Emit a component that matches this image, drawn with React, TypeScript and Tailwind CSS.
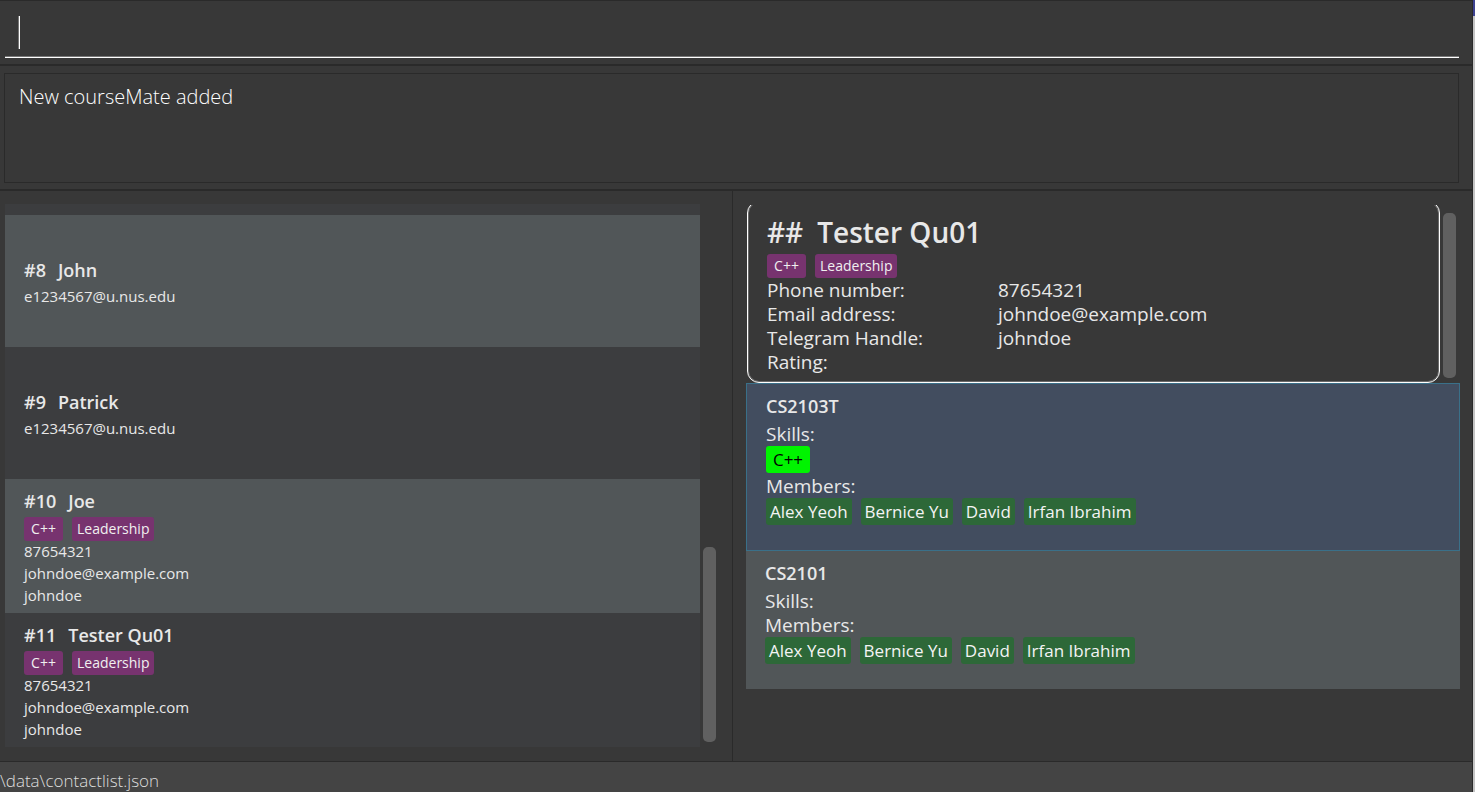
import React from "react";

type Contact = {
  index: number;
  name: string;
  tags?: string[];
  details: string[];
};

type Group = {
  name: string;
  skills: string[];
  members: string[];
  selected?: boolean;
};

const contacts: Contact[] = [
  { index: 8, name: "John", details: ["e1234567@u.nus.edu"] },
  { index: 9, name: "Patrick", details: ["e1234567@u.nus.edu"] },
  {
    index: 10,
    name: "Joe",
    tags: ["C++", "Leadership"],
    details: ["87654321", "johndoe@example.com", "johndoe"],
  },
  {
    index: 11,
    name: "Tester Qu01",
    tags: ["C++", "Leadership"],
    details: ["87654321", "johndoe@example.com", "johndoe"],
  },
];

const profile: [string, string][] = [
  ["Phone number:", "87654321"],
  ["Email address:", "johndoe@example.com"],
  ["Telegram Handle:", "johndoe"],
  ["Rating:", ""],
];

const members = ["Alex Yeoh", "Bernice Yu", "David", "Irfan Ibrahim"];

const groups: Group[] = [
  { name: "CS2103T", skills: ["C++"], members, selected: true },
  { name: "CS2101", skills: [], members },
];

function SkillTags({ tags }: { tags: string[] }) {
  return (
    <div className="flex gap-[9px]">
      {tags.map((tag) => (
        <span
          key={tag}
          className="h-6 min-w-[39px] rounded-[3px] bg-[#77336f] px-[5px] text-center text-sm leading-[23px] font-medium text-[#f0f0f0]"
        >
          {tag}
        </span>
      ))}
    </div>
  );
}

function ContactRow({ contact }: { contact: Contact }) {
  return (
    <li className="flex min-h-[132px] flex-col justify-center pt-2 pr-4 pb-[7px] pl-[19px] odd:bg-[#515658] even:bg-[#3c3d3f]">
      <h2 className="mb-0.5 flex gap-3 text-lg leading-7 font-semibold">
        <span>#{contact.index}</span>
        <span>{contact.name}</span>
      </h2>
      {contact.tags && <SkillTags tags={contact.tags} />}
      <div className="-mt-px text-[15px] leading-[22px]">
        {contact.details.map((detail) => (
          <p key={detail}>{detail}</p>
        ))}
      </div>
    </li>
  );
}

function GroupRow({ group }: { group: Group }) {
  return (
    <li
      className={
        group.selected
          ? "border border-[#3a7089] bg-[#424d5f] pt-2 pr-4 pb-[25px] pl-[19px]"
          : "bg-[#515658] pt-2 pr-4 pb-[25px] pl-[19px]"
      }
    >
      <h2 className="mb-0.5 text-lg leading-7 font-semibold">{group.name}</h2>
      <p className="text-[19px] leading-6">Skills:</p>
      {group.skills.length > 0 && (
        <div className="mb-px flex gap-[9px]">
          {group.skills.map((skill) => (
            <span
              key={skill}
              className="h-[27px] min-w-11 rounded-[3px] bg-[#00f400] px-1 text-center text-[17px] leading-[27px] font-medium text-black"
            >
              {skill}
            </span>
          ))}
        </div>
      )}
      <p className="text-[19px] leading-6">Members:</p>
      <div className="flex gap-[9px]">
        {group.members.map((member) => (
          <span
            key={member}
            className="h-[27px] rounded-[3px] bg-[#2d6838] px-1 text-[17px] leading-[27px] font-medium text-[#f4f4f4]"
          >
            {member}
          </span>
        ))}
      </div>
    </li>
  );
}

export default function App() {
  return (
    <div className="flex min-h-screen bg-[#383838] font-['Open_Sans','Noto_Sans',sans-serif] text-[#e8e8e8]">
      <div className="flex min-w-0 flex-1 flex-col border-t border-r border-[#2a2a2a]">
        <header className="border-b-2 border-[#2a2a2a] pr-[13px] pb-1.5 pl-[5px]">
          <div className="flex h-[57px] items-center border-b border-white pt-1.5 pl-[13px] shadow-[inset_0_-1px_0_#777]">
            <span className="h-[33px] w-0.5 border-l border-[#777] bg-white" />
            <input
              aria-label="Command"
              className="h-10 min-w-0 flex-1 bg-transparent text-xl font-light caret-transparent outline-none"
            />
          </div>
        </header>

        <section className="flex border-b-2 border-[#2a2a2a] pt-[7px] pr-[13px] pb-1.5 pl-1">
          <textarea
            readOnly
            aria-label="Result"
            defaultValue="New courseMate added"
            className="h-[110px] flex-1 resize-none border border-[#2a2a2a] bg-transparent px-3.5 py-[9px] text-xl leading-7 font-light text-white outline-none"
          />
        </section>

        <main className="grid flex-1 grid-cols-[733fr_739fr]">
          <section className="flex border-r border-[#2a2a2a] pt-[13px] pr-4 pb-3.5 pl-[5px]">
            <ul className="min-w-0 flex-1 border-t-[11px] border-[#3c3d3f]">
              {contacts.map((contact) => (
                <ContactRow key={contact.index} contact={contact} />
              ))}
            </ul>
            <div className="ml-[3px] flex w-[13px] flex-col justify-end pb-[5px]">
              <div className="h-[195px] rounded-[5px] bg-[#606060]" />
            </div>
          </section>

          <section className="flex flex-col pt-3.5 pr-3 pl-[13px]">
            <div className="flex overflow-hidden pl-px">
              <article className="-mt-1 flex-1 rounded-xl border border-white px-[19px] pt-2 pb-2 shadow-[inset_0_0_0_1px_#6a6a6a]">
                <h1 className="mt-1 mb-1 flex gap-3.5 text-[28px] leading-9 font-semibold">
                  <span>##</span>
                  <span>Tester Qu01</span>
                </h1>
                <SkillTags tags={["C++", "Leadership"]} />
                <dl className="grid grid-cols-[231px_1fr] text-[19px] leading-6">
                  {profile.map(([label, value]) => (
                    <React.Fragment key={label}>
                      <dt>{label}</dt>
                      <dd>{value}</dd>
                    </React.Fragment>
                  ))}
                </dl>
              </article>
              <div className="mr-1 ml-[3px] flex w-[13px] flex-col pt-2 pb-[5px]">
                <div className="flex-1 rounded-[5px] bg-[#606060]" />
              </div>
            </div>
            <ul>
              {groups.map((group) => (
                <GroupRow key={group.name} group={group} />
              ))}
            </ul>
          </section>
        </main>

        <footer className="border-t border-[#2a2a2a] bg-[#444444] pt-2 text-[17px] leading-[22px] font-light text-[#dddddd]">
          \data\contactlist.json
        </footer>
      </div>
      <div className="flex w-0.5 flex-col bg-[#c4c4c4]">
        <div className="h-4 bg-[#3d4290]" />
      </div>
    </div>
  );
}
